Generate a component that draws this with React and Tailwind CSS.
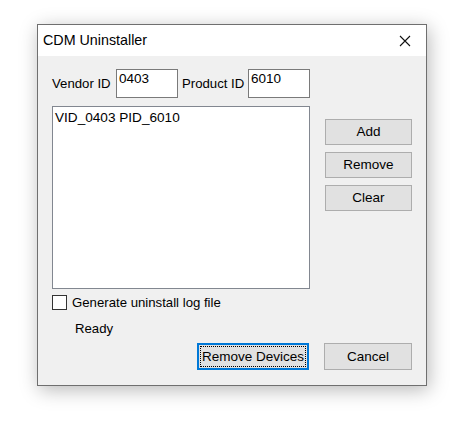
import React, { useState } from "react";

const font = { fontFamily: '"Liberation Sans", Arial, sans-serif' };

const WinButton = ({ children, className = "", focused = false }) => {
  if (focused) {
    return (
      <button
        className={`relative bg-[#e1e1e1] border-2 border-[#0078d7] text-[13.5px] text-black leading-none flex items-center justify-center ${className}`}
      >
        <span className="absolute inset-[1px] border border-dotted border-black" />
        <span className="relative">{children}</span>
      </button>
    );
  }
  return (
    <button
      className={`bg-[#e1e1e1] border border-[#adadad] text-[13.5px] text-black leading-none flex items-center justify-center ${className}`}
    >
      {children}
    </button>
  );
};

export default function App() {
  const [logChecked, setLogChecked] = useState(false);

  return (
    <div className="min-h-screen bg-white" style={font}>
      <div className="pl-[37px] pt-[24px]">
        <div className="w-[390px] h-[362px] border border-[#6f6f6f] bg-[#f0f0f0] flex flex-col shadow-[2px_4px_18px_rgba(0,0,0,0.28)]">
          {/* Title bar */}
          <div className="h-[31px] bg-white flex items-center justify-between pl-[5px] pr-[15px]">
            <span className="text-[14.3px] text-black">CDM Uninstaller</span>
            <svg width="12" height="12" viewBox="0 0 12 12">
              <path d="M1 1 L11 11 M11 1 L1 11" stroke="#111" strokeWidth="1.1" fill="none" />
            </svg>
          </div>

          {/* Body */}
          <div className="flex-1 flex flex-col pl-[14px] text-[13.2px] text-black">
            {/* IDs */}
            <div className="flex items-center mt-[13px] h-[29px]">
              <span className="w-[64px] whitespace-nowrap">Vendor ID</span>
              <div className="w-[62px] h-[29px] bg-white border border-[#7a7a7a] pl-[2px] pt-[1px] leading-[15px] text-[13.5px]">
                0403
              </div>
              <span className="w-[70px] pl-[4px] whitespace-nowrap">Product ID</span>
              <div className="w-[62px] h-[29px] bg-white border border-[#7a7a7a] pl-[2px] pt-[1px] leading-[15px] text-[13.5px]">
                6010
              </div>
            </div>

            {/* List + side buttons */}
            <div className="flex mt-[8px]">
              <div className="w-[258px] h-[183px] bg-white border border-[#828790] pl-[2px] pt-[3px] leading-[15px] text-[13.6px]">
                VID_0403 PID_6010
              </div>
              <div className="ml-[15px] pt-[13px] flex flex-col gap-[7px]">
                <WinButton className="w-[87px] h-[26px]">Add</WinButton>
                <WinButton className="w-[87px] h-[26px]">Remove</WinButton>
                <WinButton className="w-[87px] h-[26px]">Clear</WinButton>
              </div>
            </div>

            {/* Checkbox */}
            <label className="flex items-center mt-[6px] h-[15px]">
              <span
                onClick={() => setLogChecked(!logChecked)}
                className="w-[15px] h-[15px] bg-white border border-[#333] flex items-center justify-center"
              >
                {logChecked && (
                  <svg width="11" height="11" viewBox="0 0 11 11">
                    <path d="M1.5 5.5 L4.5 8.5 L9.5 2" stroke="#000" strokeWidth="1.4" fill="none" />
                  </svg>
                )}
              </span>
              <span className="ml-[5px]">Generate uninstall log file</span>
            </label>

            {/* Status */}
            <div className="mt-[11px] ml-[23px] leading-[15px]">Ready</div>

            {/* Bottom buttons */}
            <div className="flex mt-[7px] ml-[145px] gap-[15px]">
              <WinButton focused className="w-[112px] h-[27px]">Remove Devices</WinButton>
              <WinButton className="w-[88px] h-[27px]">Cancel</WinButton>
            </div>
          </div>
        </div>
      </div>
    </div>
  );
}
